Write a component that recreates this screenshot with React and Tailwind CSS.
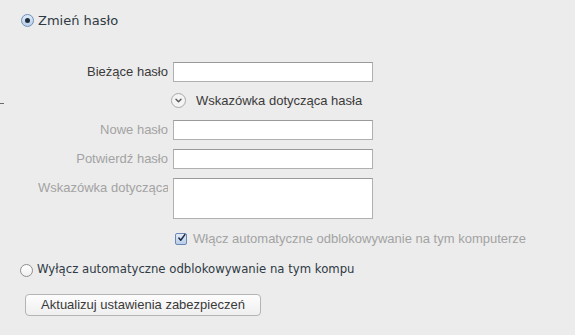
import React from "react";

const helv = { fontFamily: '"Liberation Sans", Arial, sans-serif' };
const lucida = { fontFamily: '"DejaVu Sans", "Liberation Sans", sans-serif' };

function Radio({ checked }) {
  return (
    <div className={"w-[13px] h-[13px] rounded-full border flex items-center justify-center shrink-0 " + (checked ? "border-[#6f8fb8] bg-gradient-to-b from-[#dfeaf8] to-[#b9cfe9]" : "border-[#8e8e8e] bg-gradient-to-b from-[#ffffff] to-[#f0f0f0]")}>
      {checked && <div className="w-[5px] h-[5px] rounded-full bg-[#1f2d3d]" />}
    </div>
  );
}

function Row({ label, gray, left, children, top }) {
  return (
    <div className={"flex " + (top ? "items-start" : "items-center")} style={helv}>
      <div className={"ml-[38px] w-[130px] whitespace-nowrap overflow-hidden text-[13px] leading-[20px] " + (left ? "text-left " : "text-right ") + (gray ? "text-[#a3a3a3]" : "text-[#3a3a3a]")}>
        {label}
      </div>
      <div className="ml-[5px]">{children}</div>
    </div>
  );
}

function Input({ h = 20 }) {
  return <div className={"w-[200px] bg-white border border-[#b0b0b0] border-t-[#9a9a9a] " + (h === 20 ? "h-[20px]" : "h-[41px]")} />;
}

export default function App() {
  return (
    <div className="relative w-[575px] h-[335px] bg-[#ececec] overflow-hidden">
      <div className="absolute left-0 top-[103px] w-[4px] h-[1px] bg-[#6a6a6a]" />
      <div className="flex flex-col pt-[14px]">
        <div className="flex items-center ml-[21px] h-[13px]">
          <Radio checked />
          <span className="ml-[4px] text-[13px] text-[#2f3a45]" style={lucida}>Zmień hasło</span>
        </div>
        <div className="mt-[35px]">
          <Row label="Bieżące hasło"><Input /></Row>
        </div>
        <div className="flex items-center ml-[171px] mt-[11px] h-[15px]" style={helv}>
          <div className="w-[15px] h-[15px] rounded-full border border-[#a8a8a8] bg-[#f4f4f4] flex items-center justify-center">
            <svg width="9" height="9" viewBox="0 0 9 9">
              <path d="M2 3.3 L4.5 5.8 L7 3.3" fill="none" stroke="#555" strokeWidth="1.4" strokeLinecap="round" strokeLinejoin="round" />
            </svg>
          </div>
          <span className="ml-[10px] text-[13px] text-[#3a3a3a]">Wskazówka dotycząca hasła</span>
        </div>
        <div className="mt-[12px] flex flex-col gap-[9px]">
          <Row label="Nowe hasło" gray><Input /></Row>
          <Row label="Potwierdź hasło" gray><Input /></Row>
          <Row label="Wskazówka dotycząca hasła" gray left top><Input h={41} /></Row>
        </div>
        <div className="flex items-center ml-[175px] mt-[13px] h-[13px]" style={helv}>
          <div className="w-[12px] h-[12px] border border-[#6c87b0] bg-gradient-to-b from-[#e3ecf8] to-[#b8cde8] flex items-center justify-center rounded-[2px]">
            <svg width="12" height="12" viewBox="0 0 12 12" className="-mt-[2px] ml-[1px]">
              <path d="M2.5 6 L5 9 L10.5 1.5" fill="none" stroke="#1b2a44" strokeWidth="2" strokeLinecap="round" strokeLinejoin="round" />
            </svg>
          </div>
          <span className="ml-[6px] text-[13px] text-[#a3a3a3]">Włącz automatyczne odblokowywanie na tym komputerze</span>
        </div>
        <div className="flex items-center ml-[20px] mt-[18px] h-[14px]">
          <Radio />
          <span className="ml-[4px] text-[11.7px] text-[#2f3a45]" style={lucida}>Wyłącz automatyczne odblokowywanie na tym kompu</span>
        </div>
        <div className="ml-[25px] mt-[17px]">
          <div className="w-[236px] h-[22px] rounded-[4px] border border-[#b4b4b4] bg-gradient-to-b from-[#fdfdfd] to-[#efefef] flex items-center justify-center text-[13px] text-[#3a3a3a]" style={helv}>
            Aktualizuj ustawienia zabezpieczeń
          </div>
        </div>
      </div>
    </div>
  );
}
